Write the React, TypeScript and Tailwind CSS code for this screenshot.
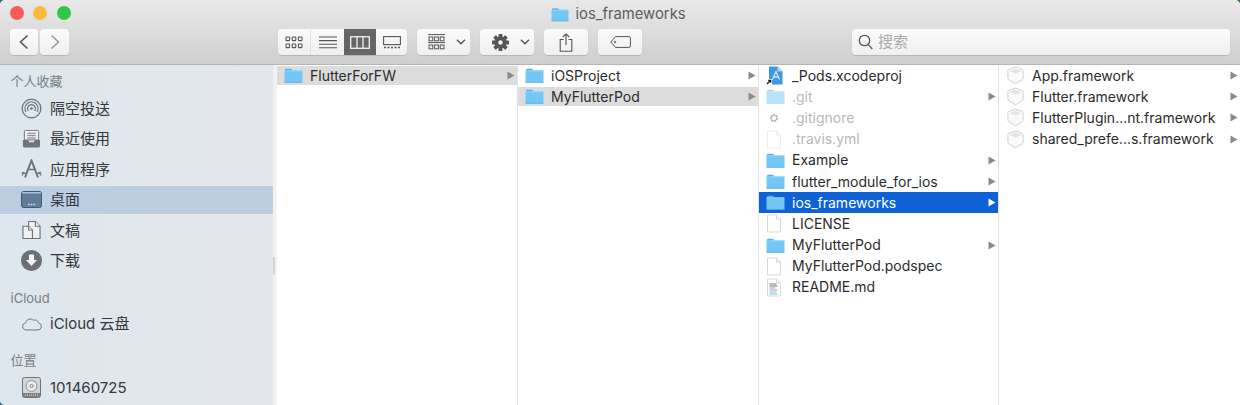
// finder column view
import type { ReactNode } from "react";

const FONT = "font-['Inter','Noto_Sans_CJK_SC',sans-serif]";

const FolderIcon = ({ className = "", w = 19, h = 15 }: { className?: string; w?: number; h?: number }) => (
  <svg width={w} height={h} viewBox="0 0 19 15" className={className}>
    <path d="M1 3.2V2a1.2 1.2 0 0 1 1.2-1.2h4.4c.6 0 .9.2 1.2.6l.8 1z" fill="#55b1ea" />
    <rect x="0.5" y="2.4" width="18" height="12.2" rx="1.2" fill="#72c7f7" />
    <rect x="0.5" y="2.4" width="18" height="1" fill="#93d6fa" />
    <rect x="0.5" y="13.8" width="18" height="0.8" fill="#56ade6" />
  </svg>
);

const PageIcon = ({ children, light = false }: { children?: ReactNode; light?: boolean }) => (
  <svg width="16" height="19" viewBox="0 0 16 19" className={light ? "opacity-50" : ""}>
    <path d="M1.5 1h9l4 4v13h-13z" fill="#fff" stroke="#d9d9d9" strokeWidth="1" />
    <path d="M10.5 1v4h4" fill="#f4f4f4" stroke="#d9d9d9" strokeWidth="1" />
    {children}
  </svg>
);

const GearDotIcon = () => (
  <svg width="16" height="19" viewBox="0 0 16 19">
    <circle cx="8" cy="10" r="3" fill="none" stroke="#b4b4b4" strokeWidth="2" strokeDasharray="2 0.6" />
    <circle cx="8" cy="10" r="1" fill="#fff" />
  </svg>
);

const ReadmeIcon = () => (
  <PageIcon>
    <path d="M3.5 6h7" stroke="#777" strokeWidth="1" />
    <path d="M3.5 8h8" stroke="#777" strokeWidth="1" />
    <path d="M3.5 10h6" stroke="#d98ab5" strokeWidth="1" />
    <path d="M3.5 12h8" stroke="#8f9fd8" strokeWidth="1" />
    <path d="M3.5 14h7" stroke="#7cc4c9" strokeWidth="1" />
    <path d="M3.5 16h8" stroke="#7cc4c9" strokeWidth="1" />
  </PageIcon>
);

const XcodeIcon = () => (
  <svg width="19" height="19" viewBox="0 0 19 19">
    <path d="M3 0.5h8.5l5 5v13H3z" fill="#3f97e8" />
    <path d="M11.5 0.5v5h5" fill="#a9d2f6" />
    <path d="M6.5 13.5 10 5.5l3.5 8M7.5 11h5" fill="none" stroke="#cfe6fb" strokeWidth="1.3" />
    <rect x="0" y="13" width="6" height="6" fill="#fff" />
    <path d="M1 18l3.5-3.5M2.2 14.3h2.5v2.5" fill="none" stroke="#111" strokeWidth="1.2" />
  </svg>
);

const FrameworkIcon = () => (
  <svg width="19" height="19" viewBox="0 0 19 19">
    <path
      d="M9 1.2a1.5 1.5 0 0 1 1 0l6.3 2.2a1.2 1.2 0 0 1 .8 1.1v7.6a2 2 0 0 1-.9 1.6l-6.2 3.8a1 1 0 0 1-1 0l-6.2-3.8a2 2 0 0 1-.9-1.6V4.5a1.2 1.2 0 0 1 .8-1.1z"
      fill="#fafafa"
      stroke="#d2d2d2"
      strokeWidth="1"
    />
    <path d="M3.5 5 9.5 2.8l6 2.2-6 2.6z" fill="#e4e4e4" />
  </svg>
);

const Chevron = ({ dir, color }: { dir: "left" | "right"; color: string }) => (
  <svg width="12" height="16" viewBox="0 0 12 16">
    <path
      d={dir === "left" ? "M9.5 1.5 2.5 8l7 6.5" : "M2.5 1.5 9.5 8l-7 6.5"}
      fill="none"
      stroke={color}
      strokeWidth="1.6"
    />
  </svg>
);

const SmallDown = () => (
  <svg width="10" height="6" viewBox="0 0 10 6">
    <path d="M1 .8 5 4.8 9 .8" fill="none" stroke="#555" strokeWidth="1.4" />
  </svg>
);

const GridIcon = () => (
  <svg width="18" height="13" viewBox="0 0 18 13" fill="none" stroke="#555" strokeWidth="1.1">
    <rect x="1" y="1" width="3.6" height="3.6" rx=".5" />
    <rect x="7.2" y="1" width="3.6" height="3.6" rx=".5" />
    <rect x="13.4" y="1" width="3.6" height="3.6" rx=".5" />
    <rect x="1" y="8" width="3.6" height="3.6" rx=".5" />
    <rect x="7.2" y="8" width="3.6" height="3.6" rx=".5" />
    <rect x="13.4" y="8" width="3.6" height="3.6" rx=".5" />
  </svg>
);

const ListIcon = () => (
  <svg width="18" height="13" viewBox="0 0 18 13" stroke="#555" strokeWidth="1.1">
    <path d="M0 1h18M0 4.6h18M0 8.2h18M0 11.8h18" />
  </svg>
);

const ColumnsIcon = () => (
  <svg width="20" height="13" viewBox="0 0 20 13" fill="none" stroke="#f2f2f2" strokeWidth="1.3">
    <rect x=".7" y=".7" width="18.6" height="11.6" />
    <path d="M7 .7v11.6M13 .7v11.6" />
  </svg>
);

const GalleryIcon = () => (
  <svg width="18" height="13" viewBox="0 0 18 13" fill="none" stroke="#555" strokeWidth="1.1">
    <rect x=".6" y=".6" width="16.8" height="8" />
    <path d="M1 11.5h2M4.5 11.5h2M8 11.5h2M11.5 11.5h2M15 11.5h2" strokeWidth="1.6" />
  </svg>
);

const ArrangeIcon = () => (
  <svg width="17" height="16" viewBox="0 0 17 16" fill="none" stroke="#555" strokeWidth="1">
    <path d="M0 .6h17" />
    <rect x="1" y="3" width="3.8" height="3.8" />
    <rect x="6.6" y="3" width="3.8" height="3.8" />
    <rect x="12.2" y="3" width="3.8" height="3.8" />
    <path d="M0 8.6h17" />
    <rect x="1" y="11" width="3.8" height="3.8" />
    <rect x="6.6" y="11" width="3.8" height="3.8" />
    <rect x="12.2" y="11" width="3.8" height="3.8" />
  </svg>
);

const GearIcon = () => (
  <svg width="17" height="17" viewBox="0 0 17 17">
    <g fill="#555">
      <rect x="6.6" y="0" width="3.8" height="17" rx=".6" />
      <rect x="6.6" y="0" width="3.8" height="17" rx=".6" transform="rotate(45 8.5 8.5)" />
      <rect x="6.6" y="0" width="3.8" height="17" rx=".6" transform="rotate(90 8.5 8.5)" />
      <rect x="6.6" y="0" width="3.8" height="17" rx=".6" transform="rotate(135 8.5 8.5)" />
      <circle cx="8.5" cy="8.5" r="6" />
    </g>
    <circle cx="8.5" cy="8.5" r="2.2" fill="#f2f2f2" />
  </svg>
);

const ShareIcon = () => (
  <svg width="14" height="19" viewBox="0 0 14 19" fill="none" stroke="#555" strokeWidth="1.1">
    <path d="M4.5 6.5H1.2v11.8h11.6V6.5H9.5M7 12V1M3.8 4 7 .9 10.2 4" />
  </svg>
);

const TagIcon = () => (
  <svg width="21" height="12" viewBox="0 0 21 12" fill="none" stroke="#555" strokeWidth="1">
    <path d="M5.5.6h13.4a1.5 1.5 0 0 1 1.5 1.5v7.8a1.5 1.5 0 0 1-1.5 1.5H5.5L.8 6z" />
    <circle cx="5" cy="6" r=".8" />
  </svg>
);

const SearchIcon = () => (
  <svg width="15" height="16" viewBox="0 0 15 16" fill="none" stroke="#555" strokeWidth="1.3">
    <circle cx="6.5" cy="6.5" r="5.2" />
    <path d="m10.3 10.6 4 4.4" />
  </svg>
);

// sidebar icons
const AirDropIcon = () => (
  <svg width="21" height="21" viewBox="0 0 22 22" fill="none" stroke="#6e7479">
    <circle cx="11" cy="11" r="9.8" strokeWidth="1.4" />
    <path d="M5.2 14.5a6.8 6.8 0 1 1 11.6 0" strokeWidth="1.3" />
    <path d="M7.8 13.5a4 4 0 1 1 6.4 0" strokeWidth="1.3" />
    <circle cx="11" cy="11" r="1.4" fill="#6e7479" stroke="none" />
  </svg>
);

const RecentsIcon = () => (
  <svg width="19" height="20" viewBox="0 0 20 20">
    <path d="M3.5 1h13a1 1 0 0 1 1 1v9h-15V2a1 1 0 0 1 1-1z" fill="#eef1f3" stroke="#6e7479" />
    <path d="M5.5 4h9M5.5 6.5h9M5.5 9h9" stroke="#6e7479" />
    <path d="M1 11h5.5l1 2.5h5l1-2.5H19v6a2 2 0 0 1-2 2H3a2 2 0 0 1-2-2z" fill="#6e7479" />
  </svg>
);

const AppsIcon = () => (
  <svg width="21" height="20" viewBox="0 0 21 20" fill="none" stroke="#6e7479">
    <path d="M4 18.5 10.5 1.5 17 18.5" strokeWidth="2" />
    <path d="M6.5 10.5h8" strokeWidth="1.5" />
    <path d="M.8 13.5l4 .9M20.2 13.5l-4 .9M1 16.5l2-3.500M20 16.5l-2-3.500" strokeWidth="1.3" />
  </svg>
);

const DesktopIcon = () => (
  <svg width="21" height="17" viewBox="0 0 21 17">
    <rect x=".5" y=".5" width="20" height="16" rx="2" fill="#5f7c98" stroke="#3f5a73" />
    <rect x="1.2" y="1.2" width="18.6" height="1.2" fill="#c8d6e3" />
    <path d="M7 13.5h1.6M9.8 13.5h1.6M12.6 13.5h1.6" stroke="#d5dfe8" strokeWidth="1.4" />
  </svg>
);

const DocsIcon = () => (
  <svg width="19" height="20" viewBox="0 0 20 20" fill="#eef1f3" stroke="#6e7479" strokeWidth="1.2">
    <path d="M7 1h7l5 5v13H7z" />
    <path d="M14 1v5h5" />
    <path d="M1 6h6l4 4v9H1z" />
    <path d="M7 6v4h4" />
  </svg>
);

const DownloadIcon = () => (
  <svg width="21" height="21" viewBox="0 0 21 21">
    <circle cx="10.5" cy="10.5" r="10.5" fill="#6a7075" />
    <path d="M8 4.5h5V10h3l-5.5 6L5 10h3z" fill="#f1f3f5" />
  </svg>
);

const CloudIcon = () => (
  <svg width="21" height="15" viewBox="0 0 22 15" fill="none" stroke="#6e7479" strokeWidth="1">
    <path d="M5 14.3h12.5a3.8 3.8 0 0 0 .9-7.500A4.6 4.6 0 0 0 13 4 5 5 0 0 0 4.800 6.800 3.800 3.800 0 0 0 5 14.300z" />
  </svg>
);

const DiskIcon = () => (
  <svg width="19" height="21" viewBox="0 0 19 21">
    <rect x=".5" y=".5" width="18" height="20" rx="2" fill="#d3d6d9" stroke="#6e7479" />
    <circle cx="9.5" cy="9" r="5.5" fill="#e8eaec" stroke="#8b9095" />
    <circle cx="9.5" cy="9" r="1.5" fill="none" stroke="#7b8085" />
    <rect x="1" y="16" width="17" height="4" fill="#7b8085" />
    <path d="M3 18h13" stroke="#dfe2e4" strokeDasharray="1 1" />
  </svg>
);

const SideHeader = ({ label, className }: { label: string; className: string }) => (
  <div className={`pl-[10.5px] text-[13px] leading-[16px] text-[#797e83] ${className}`}>{label}</div>
);

const SideRow = ({ icon, label, selected }: { icon: ReactNode; label: string; selected?: boolean }) => (
  <div
    className={`mb-[2.5px] flex h-[28px] items-center text-[15px] text-[#33383c] ${selected ? "bg-[#bccfe2]" : ""}`}
  >
    <div className="ml-[21px] mr-[8px] flex w-[21px] shrink-0 justify-center">{icon}</div>
    <span className="pt-[2px]">{label}</span>
  </div>
);

type Item = { name: string; icon: ReactNode; arrow?: boolean; state?: "grey" | "blue"; dim?: boolean };

const Arrow = ({ color }: { color: string }) => (
  <svg width="8" height="9" viewBox="0 0 8 9" className="shrink-0">
    <path d="M.5.5 7.5 4.5.5 8.5z" fill={color} />
  </svg>
);

const Row = ({ item }: { item: Item }) => {
  const blue = item.state === "blue";
  const grey = item.state === "grey";
  return (
    <div className={`flex h-[21.2px] ${grey ? "py-px" : ""}`}>
      <div
        className={`flex flex-1 items-center pl-[7px] pr-[2px] text-[14px] ${
          blue ? "bg-[#0f62d6] text-white" : grey ? "bg-[#dcdcdc]" : ""
        } ${item.dim ? "text-[#b9b9b9]" : blue ? "" : "text-[#2b2b2b]"}`}
      >
        <div className="flex w-[26px] shrink-0 items-center">{item.icon}</div>
        <span className="flex-1 truncate pb-px">{item.name}</span>
        {item.arrow && <Arrow color={blue ? "#ffffff" : "#8a8a8a"} />}
      </div>
    </div>
  );
};

const Column = ({ items, className }: { items: Item[]; className: string }) => (
  <div className={className}>
    {items.map((item) => (
      <Row key={item.name} item={item} />
    ))}
  </div>
);

const col1: Item[] = [{ name: "FlutterForFW", icon: <FolderIcon />, arrow: true, state: "grey" }];
const col2: Item[] = [
  { name: "iOSProject", icon: <FolderIcon />, arrow: true },
  { name: "MyFlutterPod", icon: <FolderIcon />, arrow: true, state: "grey" },
];
const col3: Item[] = [
  { name: "_Pods.xcodeproj", icon: <XcodeIcon /> },
  { name: ".git", icon: <FolderIcon className="opacity-50" />, arrow: true, dim: true },
  { name: ".gitignore", icon: <GearDotIcon />, dim: true },
  { name: ".travis.yml", icon: <PageIcon light />, dim: true },
  { name: "Example", icon: <FolderIcon />, arrow: true },
  { name: "flutter_module_for_ios", icon: <FolderIcon />, arrow: true },
  { name: "ios_frameworks", icon: <FolderIcon />, arrow: true, state: "blue" },
  { name: "LICENSE", icon: <PageIcon /> },
  { name: "MyFlutterPod", icon: <FolderIcon />, arrow: true },
  { name: "MyFlutterPod.podspec", icon: <PageIcon /> },
  { name: "README.md", icon: <ReadmeIcon /> },
];
const col4: Item[] = [
  { name: "App.framework", icon: <FrameworkIcon />, arrow: true },
  { name: "Flutter.framework", icon: <FrameworkIcon />, arrow: true },
  { name: "FlutterPlugin...nt.framework", icon: <FrameworkIcon />, arrow: true },
  { name: "shared_prefe...s.framework", icon: <FrameworkIcon />, arrow: true },
];

const btn =
  "flex h-[26px] items-center justify-center rounded-[4px] bg-gradient-to-b from-[#fbfbfb] to-[#f0f0f0] shadow-[0_1px_1px_rgba(0,0,0,0.14)]";

export default function App() {
  return (
    <div className={`h-[405px] w-[1240px] overflow-hidden bg-[#3d5f86] ${FONT}`}>
      <div className="flex h-full flex-col overflow-hidden rounded-t-[5px] rounded-bl-[5px] bg-white">
        {/* Toolbar */}
        <div className="h-[65px] shrink-0 border-b border-[#b5b5b5] bg-gradient-to-b from-[#e9e9e9] to-[#cfcfcf]">
          <div className="grid h-[29px] grid-cols-[1fr_auto_1fr] items-center">
            <div className="flex gap-[9.5px] pb-[3px] pl-[9.5px]">
              <div className="size-[14px] rounded-full bg-[#fc5b57]" />
              <div className="size-[14px] rounded-full bg-[#fdbb3c]" />
              <div className="size-[14px] rounded-full bg-[#33c748]" />
            </div>
            <div className="flex items-center gap-[6px] pb-[1px] pr-[3px] text-[14.8px] text-[#5c5c5c]">
              <FolderIcon w={18} h={15} />
              <span>ios_frameworks</span>
            </div>
          </div>
          <div className="flex px-[10px]">
            <div className="flex gap-[2px]">
              <div className={`${btn} w-[28px]`}>
                <Chevron dir="left" color="#555" />
              </div>
              <div className={`${btn} w-[29px]`}>
                <Chevron dir="right" color="#9a9a9a" />
              </div>
            </div>
            <div className={`${btn} ml-[209px] w-[129px] overflow-hidden`}>
              <div className="flex h-full w-[33px] items-center justify-center border-r border-[#e2e2e2]">
                <GridIcon />
              </div>
              <div className="flex h-full w-[33px] items-center justify-center">
                <ListIcon />
              </div>
              <div className="flex h-full w-[32px] items-center justify-center bg-[#666]">
                <ColumnsIcon />
              </div>
              <div className="flex h-full w-[31px] items-center justify-center">
                <GalleryIcon />
              </div>
            </div>
            <div className={`${btn} ml-[10px] w-[53px] gap-[11px] pl-[6px]`}>
              <ArrangeIcon />
              <SmallDown />
            </div>
            <div className={`${btn} ml-[10px] w-[54px] gap-[11px] pl-[7px]`}>
              <GearIcon />
              <SmallDown />
            </div>
            <div className={`${btn} ml-[10px] w-[44px]`}>
              <ShareIcon />
            </div>
            <div className={`${btn} ml-[10px] w-[44px]`}>
              <TagIcon />
            </div>
            <div className={`${btn} ml-auto w-[378px] !justify-start gap-[5px] pl-[6px]`}>
              <SearchIcon />
              <span className="text-[15px] text-[#a9a9a9]">搜索</span>
            </div>
          </div>
        </div>

        <div className="flex min-h-0 flex-1">
          {/* Sidebar */}
          <div className="flex w-[277px] shrink-0 border-r border-[#f4f4f4]">
            <div className="w-[273px] bg-gradient-to-r from-[#dde7ed] to-[#e4e7ed] pt-[8px]">
              <SideHeader label="个人收藏" className="mb-[5px]" />
              <SideRow icon={<AirDropIcon />} label="隔空投送" />
              <SideRow icon={<RecentsIcon />} label="最近使用" />
              <SideRow icon={<AppsIcon />} label="应用程序" />
              <SideRow icon={<DesktopIcon />} label="桌面" selected />
              <SideRow icon={<DocsIcon />} label="文稿" />
              <SideRow icon={<DownloadIcon />} label="下载" />
              <SideHeader label="iCloud" className="mb-[4px] mt-[15px]" />
              <SideRow icon={<CloudIcon />} label="iCloud 云盘" />
              <SideHeader label="位置" className="mb-[5px] mt-[14.5px]" />
              <SideRow icon={<DiskIcon />} label="101460725" />
            </div>
            <div className="flex w-[3px] items-center bg-[#f1f1f1] pt-[62px]">
              <div className="h-[18px] w-[2px] bg-[#d4d4d4]" />
            </div>
          </div>
          <Column items={col1} className="w-[241px] border-r border-[#e3e3e3]" />
          <Column items={col2} className="w-[241px] border-r border-[#e3e3e3]" />
          <Column items={col3} className="w-[240px] border-r border-[#e3e3e3]" />
          <Column items={col4} className="flex-1" />
        </div>
      </div>
    </div>
  );
}
